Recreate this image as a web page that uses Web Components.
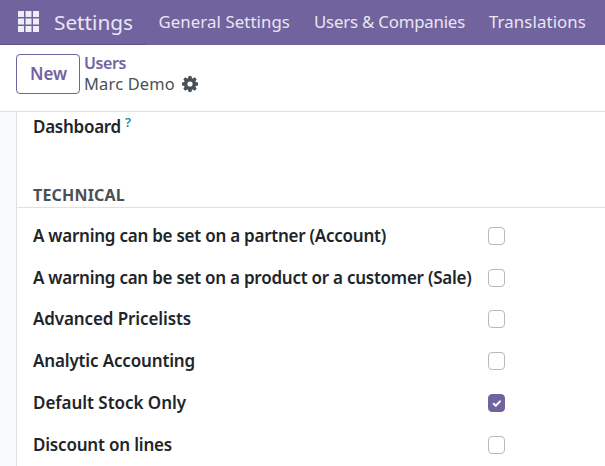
<!DOCTYPE html>
<html lang="en"><head><meta charset="utf-8"><title>Settings</title>
<style>
html,body{margin:0;height:100%;overflow:hidden}
body{font-family:"Noto Sans","Open Sans",sans-serif;font-stretch:92%;background:#fff;color:#212529}
</style></head><body>
<script>
const define=(name,html,init)=>customElements.define(name,class extends HTMLElement{
  connectedCallback(){
    if(this.shadowRoot)return;
    this.attachShadow({mode:'open'}).innerHTML=html;
    if(init)init(this,this.shadowRoot);
  }
});

/* A single line of text tracked to a given advance width. */
define('fit-text',`<style>:host{display:block;white-space:nowrap}span{display:inline-block}</style><span></span>`,(el,root)=>{
  const s=root.querySelector('span');
  s.textContent=el.getAttribute('text');
  const w=+el.getAttribute('w');
  const n=s.textContent.length;
  s.style.letterSpacing=((w-s.getBoundingClientRect().width)/n)+'px';
  el.style.width=w+'px';
});

define('nav-bar',`<style>
:host{display:flex;height:45px;background:#71639e;color:#e9e6f1;box-sizing:border-box}
.brand{display:flex;width:146px;box-sizing:border-box;padding-left:18px;border-bottom:1px solid #5f5289}
svg{margin-top:11px;width:21px;height:21px;flex:none}
.brand fit-text{font-size:20.8px;line-height:45px;margin-left:15px}
nav{display:flex;gap:24px;padding-left:12.5px;font-size:16.8px;line-height:44px}
</style>
<div class="brand"><svg viewBox="0 0 21 21" fill="#eeecf4"><path d="M0 0h6v6H0zM7.5 0h6v6h-6zM15 0h6v6h-6zM0 7.5h6v6H0zM7.5 7.5h6v6h-6zM15 7.5h6v6h-6zM0 15h6v6H0zM7.5 15h6v6h-6zM15 15h6v6h-6z"/></svg><fit-text text="Settings" w="79"></fit-text></div>
<nav><fit-text text="General Settings" w="131.5"></fit-text><fit-text text="Users &amp; Companies" w="151"></fit-text><fit-text text="Translations" w="97"></fit-text></nav>`);

define('control-panel',`<style>
:host{display:flex;height:67px;box-sizing:border-box;border-bottom:1px solid #dee2e6;padding:9px 0 0 16px;gap:4px}
button{all:unset;box-sizing:border-box;width:64px;height:40px;border:1px solid #71639e;border-radius:4px;padding-left:13px;color:#71639e;font-size:17px;font-weight:600;font-stretch:92%;line-height:38px}
.users{color:#71639e;font-size:16px;font-weight:600;line-height:21px;margin-top:-1px}
.crumb{display:flex;gap:7px;color:#495057;font-size:16.4px;line-height:20px;align-items:center}
svg{width:16px;height:16px}
</style>
<button><fit-text text="New" w="37"></fit-text></button>
<div><fit-text class="users" text="Users" w="42"></fit-text>
<div class="crumb"><fit-text text="Marc Demo" w="91"></fit-text><svg viewBox="0 0 16 16"><g fill="#495057"><circle cx="8" cy="8" r="6"/><path d="M6.6 0h2.8l.7 3H5.9zM6.6 16h2.8l.7-3H5.9zM0 6.6v2.8l3 .7V5.9zM16 6.6v2.8l-3 .7V5.9z"/><path transform="rotate(45 8 8)" d="M6.6 0h2.8l.7 3H5.9zM6.6 16h2.8l.7-3H5.9zM0 6.6v2.8l3 .7V5.9zM16 6.6v2.8l-3 .7V5.9z"/></g><circle cx="8" cy="8" r="2.6" fill="#fff"/></svg></div></div>`);

define('check-box',`<style>
:host{display:block;box-sizing:border-box;width:17px;height:18px;border:1px solid #b7b9bb;border-radius:4px;background:#fff}
:host([checked]){background:#71639e;border-color:#71639e}
svg{display:none;width:15px;height:16px}
:host([checked]) svg{display:block}
</style><svg viewBox="0 0 15 16"><path d="M4.7 8.7l2 2 4.3-4.3" fill="none" stroke="#fff" stroke-width="2" stroke-linecap="round" stroke-linejoin="round"/></svg>`);

define('setting-row',`<style>
:host{display:grid;grid-template-columns:455px 17px;height:41.75px;align-items:center;font-size:17px;font-weight:600;line-height:22px}
</style><div></div><check-box></check-box>`,(el,root)=>{
  const t=document.createElement('fit-text');
  t.setAttribute('text',el.getAttribute('label'));
  t.setAttribute('w',el.getAttribute('w'));
  root.querySelector('div').append(t);
  if(el.hasAttribute('checked'))root.querySelector('check-box').setAttribute('checked','');
});

define('form-sheet',`<style>
:host{display:block;margin-left:16px;border-left:1px solid #dee2e6;background:#fff;height:354px;box-sizing:border-box;overflow:hidden}
.dash{display:flex;gap:4px;padding-left:16px;height:72px;font-size:17px;font-weight:600;line-height:29px}
.help{color:#1b8aa8;font-size:13px;font-weight:600;line-height:20px}
.title{padding-left:16px;height:24px;box-sizing:border-box;border-bottom:1px solid #dee2e6;color:#495057;font-size:16px;font-weight:700;line-height:22px}
.rows{padding:7px 0 0 16px}
</style>
<div class="dash"><fit-text text="Dashboard" w="88"></fit-text><fit-text class="help" text="?" w="7"></fit-text></div>
<div class="title"><fit-text text="TECHNICAL" w="92"></fit-text></div>
<div class="rows"><slot></slot></div>`);

define('settings-app',`<style>:host{display:block;width:605px;height:466px;overflow:hidden;background:#fff}main{background:#f8f9fa}</style>
<nav-bar></nav-bar><control-panel></control-panel>
<main><form-sheet>
<setting-row label="A warning can be set on a partner (Account)" w="353"></setting-row>
<setting-row label="A warning can be set on a product or a customer (Sale)" w="438.5"></setting-row>
<setting-row label="Advanced Pricelists" w="158"></setting-row>
<setting-row label="Analytic Accounting" w="162"></setting-row>
<setting-row label="Default Stock Only" checked w="153"></setting-row>
<setting-row label="Discount on lines" w="139"></setting-row>
</form-sheet></main>`);
</script>
<settings-app></settings-app>
</body></html>
